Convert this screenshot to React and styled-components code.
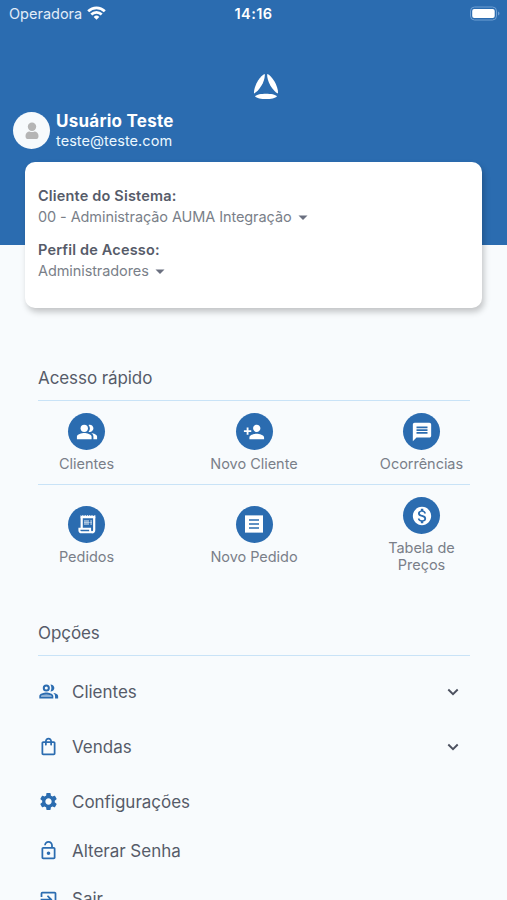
import React from 'react';
import styled, { createGlobalStyle } from 'styled-components';
import {
  MdPeopleAlt,
  MdPersonAdd,
  MdMessage,
  MdMonetizationOn,
  MdOutlineShoppingBag,
  MdSettings,
  MdOutlineLockOpen,
  MdExitToApp,
} from 'react-icons/md';

const GlobalStyle = createGlobalStyle`
  * {
    box-sizing: border-box;
  }

  body {
    margin: 0;
    background: #f8fbfd;
    font-family: 'Inter', 'Liberation Sans', sans-serif;
    color: #565b69;
    -webkit-font-smoothing: antialiased;
  }
`

const Screen = styled.div`
  height: 900px;
  overflow: hidden;
  background: #f8fbfd;
`

const Header = styled.header`
  height: 245px;
  background: #2b6cb0;
  color: #ffffff;
`

const StatusBar = styled.div`
  display: grid;
  grid-template-columns: 1fr auto 1fr;
  align-items: center;
  height: 26px;
  padding: 0 7px 0 9px;
`

const Carrier = styled.div`
  display: flex;
  align-items: center;
  gap: 5px;
  font-size: 14.5px;
  color: #e2edf8;
`

const Clock = styled.div`
  font-size: 14.5px;
  font-weight: 600;
  letter-spacing: 0.4px;
  margin-right: 2px;
`

const BatteryIcon = styled.svg`
  justify-self: end;
`

const Logo = styled.svg`
  display: block;
  margin: 47px auto 0 253px;
`

const User = styled.div`
  display: flex;
  align-items: center;
  margin-top: 11px;
  padding-left: 13px;
  gap: 6px;
`

const Avatar = styled.div`
  width: 37px;
  height: 37px;
  border-radius: 50%;
  background: #f7fafc;
  display: flex;
  align-items: center;
  justify-content: center;
`

const UserName = styled.div`
  font-size: 17px;
  line-height: 20px;
  font-weight: 700;
  letter-spacing: 0.25px;
`

const UserEmail = styled.div`
  font-size: 14.5px;
  line-height: 19px;
  letter-spacing: 0.05px;
  color: #ebf8ff;
`

const Card = styled.section`
  position: relative;
  height: 146px;
  margin: -83px 25px 0;
  padding: 23px 13px;
  border-radius: 10px;
  background: #ffffff;
  box-shadow: 2px 4px 6px rgba(0, 0, 0, 0.22);
`

const Field = styled.div`
  height: 54px;
`

const FieldLabel = styled.div`
  font-size: 14.5px;
  line-height: 21px;
  font-weight: 600;
  letter-spacing: 0.17px;
`

const FieldValue = styled.div`
  display: flex;
  align-items: center;
  gap: 6px;
  font-size: 14.5px;
  line-height: 21px;
  letter-spacing: -0.09px;
  color: #7a7f89;
`

const Section = styled.section`
  margin: ${({ $top }) => $top}px 37px 0 38px;
`

const SectionTitle = styled.h2`
  margin: 0;
  height: 34px;
  border-bottom: 1px solid #c9e3f7;
  font-size: 17px;
  line-height: 22px;
  font-weight: 400;
  letter-spacing: -0.08px;
`

const ShortcutRow = styled.div`
  display: flex;
  align-items: center;
  justify-content: space-between;
  height: ${({ $height }) => $height}px;
  border-bottom: ${({ $last }) => ($last ? 'none' : '1px solid #c9e3f7')};
`

const Shortcut = styled.div`
  width: 97px;
  display: flex;
  flex-direction: column;
  align-items: center;
  gap: 5px;
`

const ShortcutIcon = styled.div`
  width: 37px;
  height: 37px;
  border-radius: 50%;
  background: #2b6cb0;
  color: #ffffff;
  display: flex;
  align-items: center;
  justify-content: center;
  font-size: 22px;
`

const ShortcutLabel = styled.div`
  width: 84px;
  display: flex;
  justify-content: center;
  text-align: center;
  font-size: 14.5px;
  line-height: 17px;
  letter-spacing: -0.03px;
  color: #7a7f89;
  white-space: ${({ $wrap }) => ($wrap ? 'normal' : 'nowrap')};
`

const Options = styled.div`
  padding-top: 8px;
`

const Option = styled.div`
  display: flex;
  align-items: center;
  height: ${({ $height }) => $height}px;
  padding-right: 11px;
  font-size: 17px;
  letter-spacing: -0.02px;

  > svg:first-child {
    flex: none;
    font-size: 21px;
    color: #2b6cb0;
    margin-right: 13px;
  }
`

const OptionLabel = styled.span`
  flex: 1;
`

const PeopleIcon = () => (
  <svg width="1em" height="1em" viewBox="0 0 24 24" fill="currentColor">
    <path d="M17.500 13.600c1.200.9 2 2 2 3.600v2.800H23v-3c0-2-2.900-3-5.500-3.400z" />
    <path d="M14.200 12c2.600 0 4.500-1.790 4.500-4s-1.900-4-4.500-4c.7 1.200 1.100 2.600 1.100 4s-.4 2.800-1.100 4z" />
    <circle cx="9.500" cy="8" r="2.900" fill="none" stroke="currentColor" strokeWidth="2.300" />
    <path d="M9.500 13c-2.670 0-8 1.340-8 4v3h16v-3c0-2.660-5.330-4-8-4zm6 5h-12v-1c.2-.7 3.300-1.700 6-1.700s5.800 1 6 1.700z" />
    <path d="M3.500 18v-1c.2-.7 3.300-2 6-2s5.800 1.300 6 2v1z" opacity="0.5" />
  </svg>
)

const ReceiptIcon = () => (
  <svg width="18" height="18" viewBox="0 0 18 18">
    <path
      d="M0 0l1 .7 1-.7 1 .7 1-.7 1 .7 1-.7 1 .7 1-.7 1 .7 1-.7 1 .7 1-.7 1 .7 1-.7 1 .7 1-.7 1 .7 1-.7v18l-1-.7-1 .7-1-.7-1 .7-1-.7-1 .7-1-.7-1 .7-1-.7-1 .7-1-.7-1 .7-1-.7-1 .7-1-.7-1 .7-1-.7-1 .7z"
      fill="#ffffff"
    />
    <path d="M4 5h10M4 9h10M4 13h10" stroke="#2b6cb0" strokeWidth="1.400" />
  </svg>
)

const OrderIcon = () => (
  <svg width="18" height="19" viewBox="0 0 18 19" fill="none">
    <path d="M3.700 1.500v12M16.200 1.500v13.500a2.300 2.300 0 0 1-2.300 2.300" stroke="#ffffff" strokeWidth="2.200" />
    <path d="M2.600 0l1.150 1L4.900 0 6 1l1.200-1 1.100 1 1.200-1 1.100 1 1.200-1 1.100 1L14 0l1.100 1 2.200-1v3.200H2.600z" fill="#ffffff" />
    <path d="M3.500 17.300h10.500c-1.300 0-1.900-1-1.900-2.100v-1.400H1.400v1.400c0 1.200.9 2.100 2.100 2.100z" stroke="#ffffff" strokeWidth="2" />
    <path d="M6 5h5v5H6zM12.300 5h1.700v5h-1.700z" fill="#ffffff" opacity="0.45" />
    <path d="M6 7.500h8" stroke="#ffffff" strokeWidth="1" opacity="0.35" />
  </svg>
)

const rows = [
  {
    height: 84,
    items: [
      { icon: MdPeopleAlt, label: 'Clientes' },
      { icon: MdPersonAdd, label: 'Novo Cliente' },
      { icon: MdMessage, label: 'Ocorrências' },
    ],
  },
  {
    height: 100,
    last: true,
    items: [
      { icon: OrderIcon, label: 'Pedidos' },
      { icon: ReceiptIcon, label: 'Novo Pedido' },
      { icon: MdMonetizationOn, label: 'Tabela de Preços', wrap: true },
    ],
  },
]

const options = [
  { icon: PeopleIcon, label: 'Clientes', height: 55, expand: true },
  { icon: MdOutlineShoppingBag, label: 'Vendas', height: 55, expand: true },
  { icon: MdSettings, label: 'Configurações', height: 55 },
  { icon: MdOutlineLockOpen, label: 'Alterar Senha', height: 43 },
  { icon: MdExitToApp, label: 'Sair', height: 54 },
]

const Caret = () => (
  <svg width="10" height="6" viewBox="0 0 10 6">
    <path d="M0.500 1.500h9L5 6z" fill="#6b7080" />
  </svg>
)

const Chevron = () => (
  <svg width="12" height="8" viewBox="0 0 12 8" fill="none" stroke="#4c515f" strokeWidth="1.900">
    <path d="M1.300 1.500L6 6.200l4.700-4.700" />
  </svg>
)

const App = () => {
  return (
    <Screen>
      <GlobalStyle />
      <Header>
        <StatusBar>
          <Carrier>
            Operadora
            <svg width="19" height="14" viewBox="0 0 19 14" fill="none" stroke="#ffffff" strokeWidth="2.700">
              <path d="M1.200 5.200a11.800 11.800 0 0 1 16.600 0" />
              <path d="M4.300 8.500a7.300 7.300 0 0 1 10.400 0" />
              <path d="M6.700 10.900a4 4 0 0 1 5.600 0L9.500 13.800z" fill="#ffffff" stroke="none" />
            </svg>
          </Carrier>
          <Clock>14:16</Clock>
          <BatteryIcon width="31" height="15" viewBox="0 0 31 15">
            <rect x="1.500" y="1" width="26" height="13" rx="4" fill="none" stroke="#6f9fd3" />
            <rect x="3.200" y="3" width="22.500" height="9" rx="2" fill="#ffffff" />
            <path d="M29 5.500c2 .8 2 3.200 0 4z" fill="#6f9fd3" />
          </BatteryIcon>
        </StatusBar>
        <Logo width="26" height="27" viewBox="0 0 26 27" fill="#ffffff">
          <path d="M11.800 1C7.500 2 0.500 13 1 20.500C6 18.500 12.500 8 11.800 1z" />
          <path d="M14.200 1C18.500 2 25.500 13 25 20.500C20 18.500 13.500 8 14.200 1z" />
          <path d="M2 23.200C5 19.900 21 19.900 24 23.200C21 27 5 27 2 23.200z" />
        </Logo>
        <User>
          <Avatar>
            <svg width="14" height="18" viewBox="0 0 14 18" fill="#b5b5b5">
              <circle cx="7" cy="4.800" r="4.200" />
              <path d="M0.500 14c0-3 2-4.500 4-4.500 1.500.8 3.500.8 5 0 2 0 4 1.500 4 4.500 0 2-.8 3-2 3h-9c-1.200 0-2-1-2-3z" />
            </svg>
          </Avatar>
          <div>
            <UserName>Usuário Teste</UserName>
            <UserEmail>teste@teste.com</UserEmail>
          </div>
        </User>
      </Header>

      <Card>
        <Field>
          <FieldLabel>Cliente do Sistema:</FieldLabel>
          <FieldValue>00 - Administração AUMA Integração <Caret /></FieldValue>
        </Field>
        <Field>
          <FieldLabel>Perfil de Acesso:</FieldLabel>
          <FieldValue>Administradores <Caret /></FieldValue>
        </Field>
      </Card>

      <Section $top={59}>
        <SectionTitle>Acesso rápido</SectionTitle>
        {rows.map((row) => (
          <ShortcutRow key={row.height} $height={row.height} $last={row.last}>
            {row.items.map(({ icon: Icon, label, wrap }) => (
              <Shortcut key={label}>
                <ShortcutIcon><Icon /></ShortcutIcon>
                <ShortcutLabel $wrap={wrap}>{label}</ShortcutLabel>
              </Shortcut>
            ))}
          </ShortcutRow>
        ))}
      </Section>

      <Section $top={37}>
        <SectionTitle>Opções</SectionTitle>
        <Options>
          {options.map(({ icon: Icon, label, height, expand }) => (
            <Option key={label} $height={height}>
              <Icon />
              <OptionLabel>{label}</OptionLabel>
              {expand && <Chevron />}
            </Option>
          ))}
        </Options>
      </Section>
    </Screen>
  )
}

export default App;
